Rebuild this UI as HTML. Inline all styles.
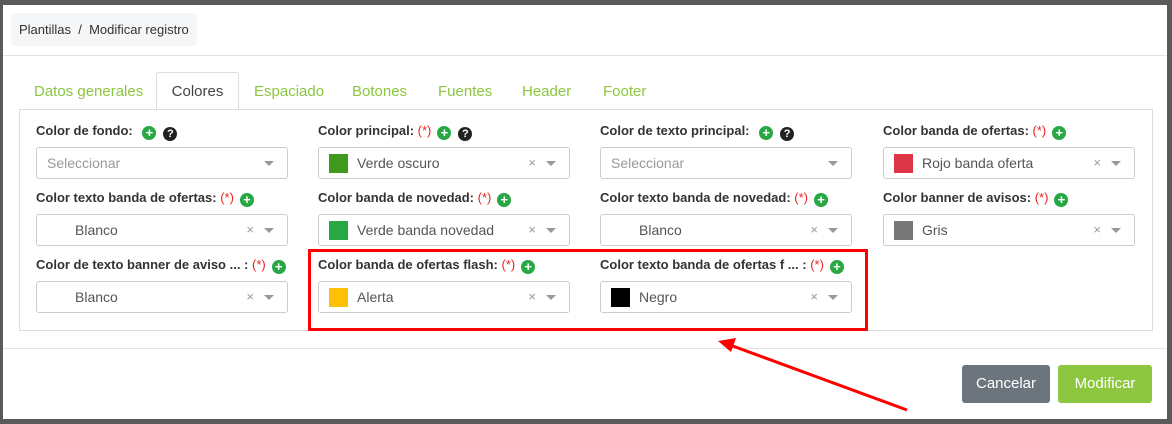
<!DOCTYPE html>
<html><head><style>
*{box-sizing:border-box;margin:0;padding:0}
body{width:1172px;height:424px;background:#5a5a5a;font-family:"Liberation Sans",sans-serif;position:relative;overflow:hidden}
.modal{position:absolute;left:3px;top:5px;width:1164px;height:414px;background:#fff}
.bc{position:absolute;left:8px;top:8px;height:33px;padding:0 8px;background:#f5f6f8;border-radius:4px;font-size:13px;color:#333;line-height:33px}
.hl{position:absolute;left:0;right:0;height:1px;background:#e3e3e3}
.tab{position:absolute;top:78px;font-size:15px;color:#8cc63f}
.act{position:absolute;left:153px;top:67px;width:83px;height:38px;border:1px solid #ddd;border-bottom:1px solid #fff;background:#fff;border-radius:3px 3px 0 0;color:#444;font-size:15px;text-align:center;line-height:38px}
.panel{position:absolute;left:16px;top:104px;width:1134px;height:222px;border:1px solid #ddd}
.lbl{position:absolute;font-size:13px;font-weight:bold;color:#333;white-space:nowrap}
.req{color:#e22;font-weight:normal}
.plus{display:inline-block;width:14px;height:14px;border-radius:50%;background:#28a745;color:#fff;font-size:13px;line-height:14px;text-align:center;vertical-align:-2px;margin-left:6px;font-weight:bold}
.q{display:inline-block;width:14px;height:14px;border-radius:50%;background:#222;color:#fff;font-size:11px;line-height:14px;text-align:center;vertical-align:-2px;margin-left:7px;font-weight:bold}
.sel{position:absolute;width:252px;height:32px;border:1px solid #ccc;border-radius:3px;font-size:14px;color:#555;line-height:30px}
.sel .sw{position:absolute;left:10px;top:6px;width:19px;height:19px}
.sel .t{position:absolute;left:38px}
.sel .ph{position:absolute;left:10px;color:#999}
.sel .x{position:absolute;right:33px;color:#999;font-size:13px}
.sel .ar{position:absolute;right:13px;top:13px;border:5px solid transparent;border-top:5px solid #999;border-bottom:0}
.btn{position:absolute;top:360px;height:38px;border-radius:3px;color:#fff;font-size:15px;line-height:38px;text-align:center}
</style></head><body>
<div class="modal">
<div class="bc">Plantillas &nbsp;/&nbsp; Modificar registro</div>
<div class="hl" style="top:50px"></div>
<div class="tab" style="left:31px">Datos generales</div>
<div class="act">Colores</div>
<div class="tab" style="left:251px">Espaciado</div>
<div class="tab" style="left:349px">Botones</div>
<div class="tab" style="left:435px">Fuentes</div>
<div class="tab" style="left:519px">Header</div>
<div class="tab" style="left:600px">Footer</div>
<div class="panel"></div>

<div class="lbl" style="left:33px;top:118px">Color de fondo: <span class="plus">+</span><span class="q">?</span></div>
<div class="sel" style="left:33px;top:142px"><span class="ph">Seleccionar</span><span class="ar"></span></div>
<div class="lbl" style="left:315px;top:118px">Color principal: <span class="req">(*)</span><span class="plus">+</span><span class="q">?</span></div>
<div class="sel" style="left:315px;top:142px"><span class="sw" style="background:#3f9a1e"></span><span class="t">Verde oscuro</span><span class="x">×</span><span class="ar"></span></div>
<div class="lbl" style="left:597px;top:118px">Color de texto principal: <span class="plus">+</span><span class="q">?</span></div>
<div class="sel" style="left:597px;top:142px"><span class="ph">Seleccionar</span><span class="ar"></span></div>
<div class="lbl" style="left:880px;top:118px">Color banda de ofertas: <span class="req">(*)</span><span class="plus">+</span></div>
<div class="sel" style="left:880px;top:142px"><span class="sw" style="background:#dc3545"></span><span class="t">Rojo banda oferta</span><span class="x">×</span><span class="ar"></span></div>

<div class="lbl" style="left:33px;top:185px">Color texto banda de ofertas: <span class="req">(*)</span><span class="plus">+</span></div>
<div class="sel" style="left:33px;top:209px"><span class="t">Blanco</span><span class="x">×</span><span class="ar"></span></div>
<div class="lbl" style="left:315px;top:185px">Color banda de novedad: <span class="req">(*)</span><span class="plus">+</span></div>
<div class="sel" style="left:315px;top:209px"><span class="sw" style="background:#28a745"></span><span class="t">Verde banda novedad</span><span class="x">×</span><span class="ar"></span></div>
<div class="lbl" style="left:597px;top:185px">Color texto banda de novedad: <span class="req">(*)</span><span class="plus">+</span></div>
<div class="sel" style="left:597px;top:209px"><span class="t">Blanco</span><span class="x">×</span><span class="ar"></span></div>
<div class="lbl" style="left:880px;top:185px">Color banner de avisos: <span class="req">(*)</span><span class="plus">+</span></div>
<div class="sel" style="left:880px;top:209px"><span class="sw" style="background:#777"></span><span class="t">Gris</span><span class="x">×</span><span class="ar"></span></div>

<div class="lbl" style="left:33px;top:252px">Color de texto banner de aviso ... : <span class="req">(*)</span><span class="plus">+</span></div>
<div class="sel" style="left:33px;top:276px"><span class="t">Blanco</span><span class="x">×</span><span class="ar"></span></div>
<div class="lbl" style="left:315px;top:252px">Color banda de ofertas flash: <span class="req">(*)</span><span class="plus">+</span></div>
<div class="sel" style="left:315px;top:276px"><span class="sw" style="background:#ffc107"></span><span class="t">Alerta</span><span class="x">×</span><span class="ar"></span></div>
<div class="lbl" style="left:597px;top:252px">Color texto banda de ofertas f ... : <span class="req">(*)</span><span class="plus">+</span></div>
<div class="sel" style="left:597px;top:276px"><span class="sw" style="background:#000"></span><span class="t">Negro</span><span class="x">×</span><span class="ar"></span></div>

<div class="hl" style="top:343px"></div>
<div class="btn" style="left:959px;width:88px;background:#6c757d">Cancelar</div>
<div class="btn" style="left:1055px;width:94px;background:#8dc63f">Modificar</div>
</div>
<div style="position:absolute;left:308px;top:249px;width:560px;height:82px;border:3px solid #f00"></div>
<svg style="position:absolute;left:0;top:0" width="1172" height="424"><line x1="907" y1="410" x2="730" y2="345" stroke="#f00" stroke-width="3"/><polygon points="718,341 736,338 731,352" fill="#f00"/></svg>
</body></html>
